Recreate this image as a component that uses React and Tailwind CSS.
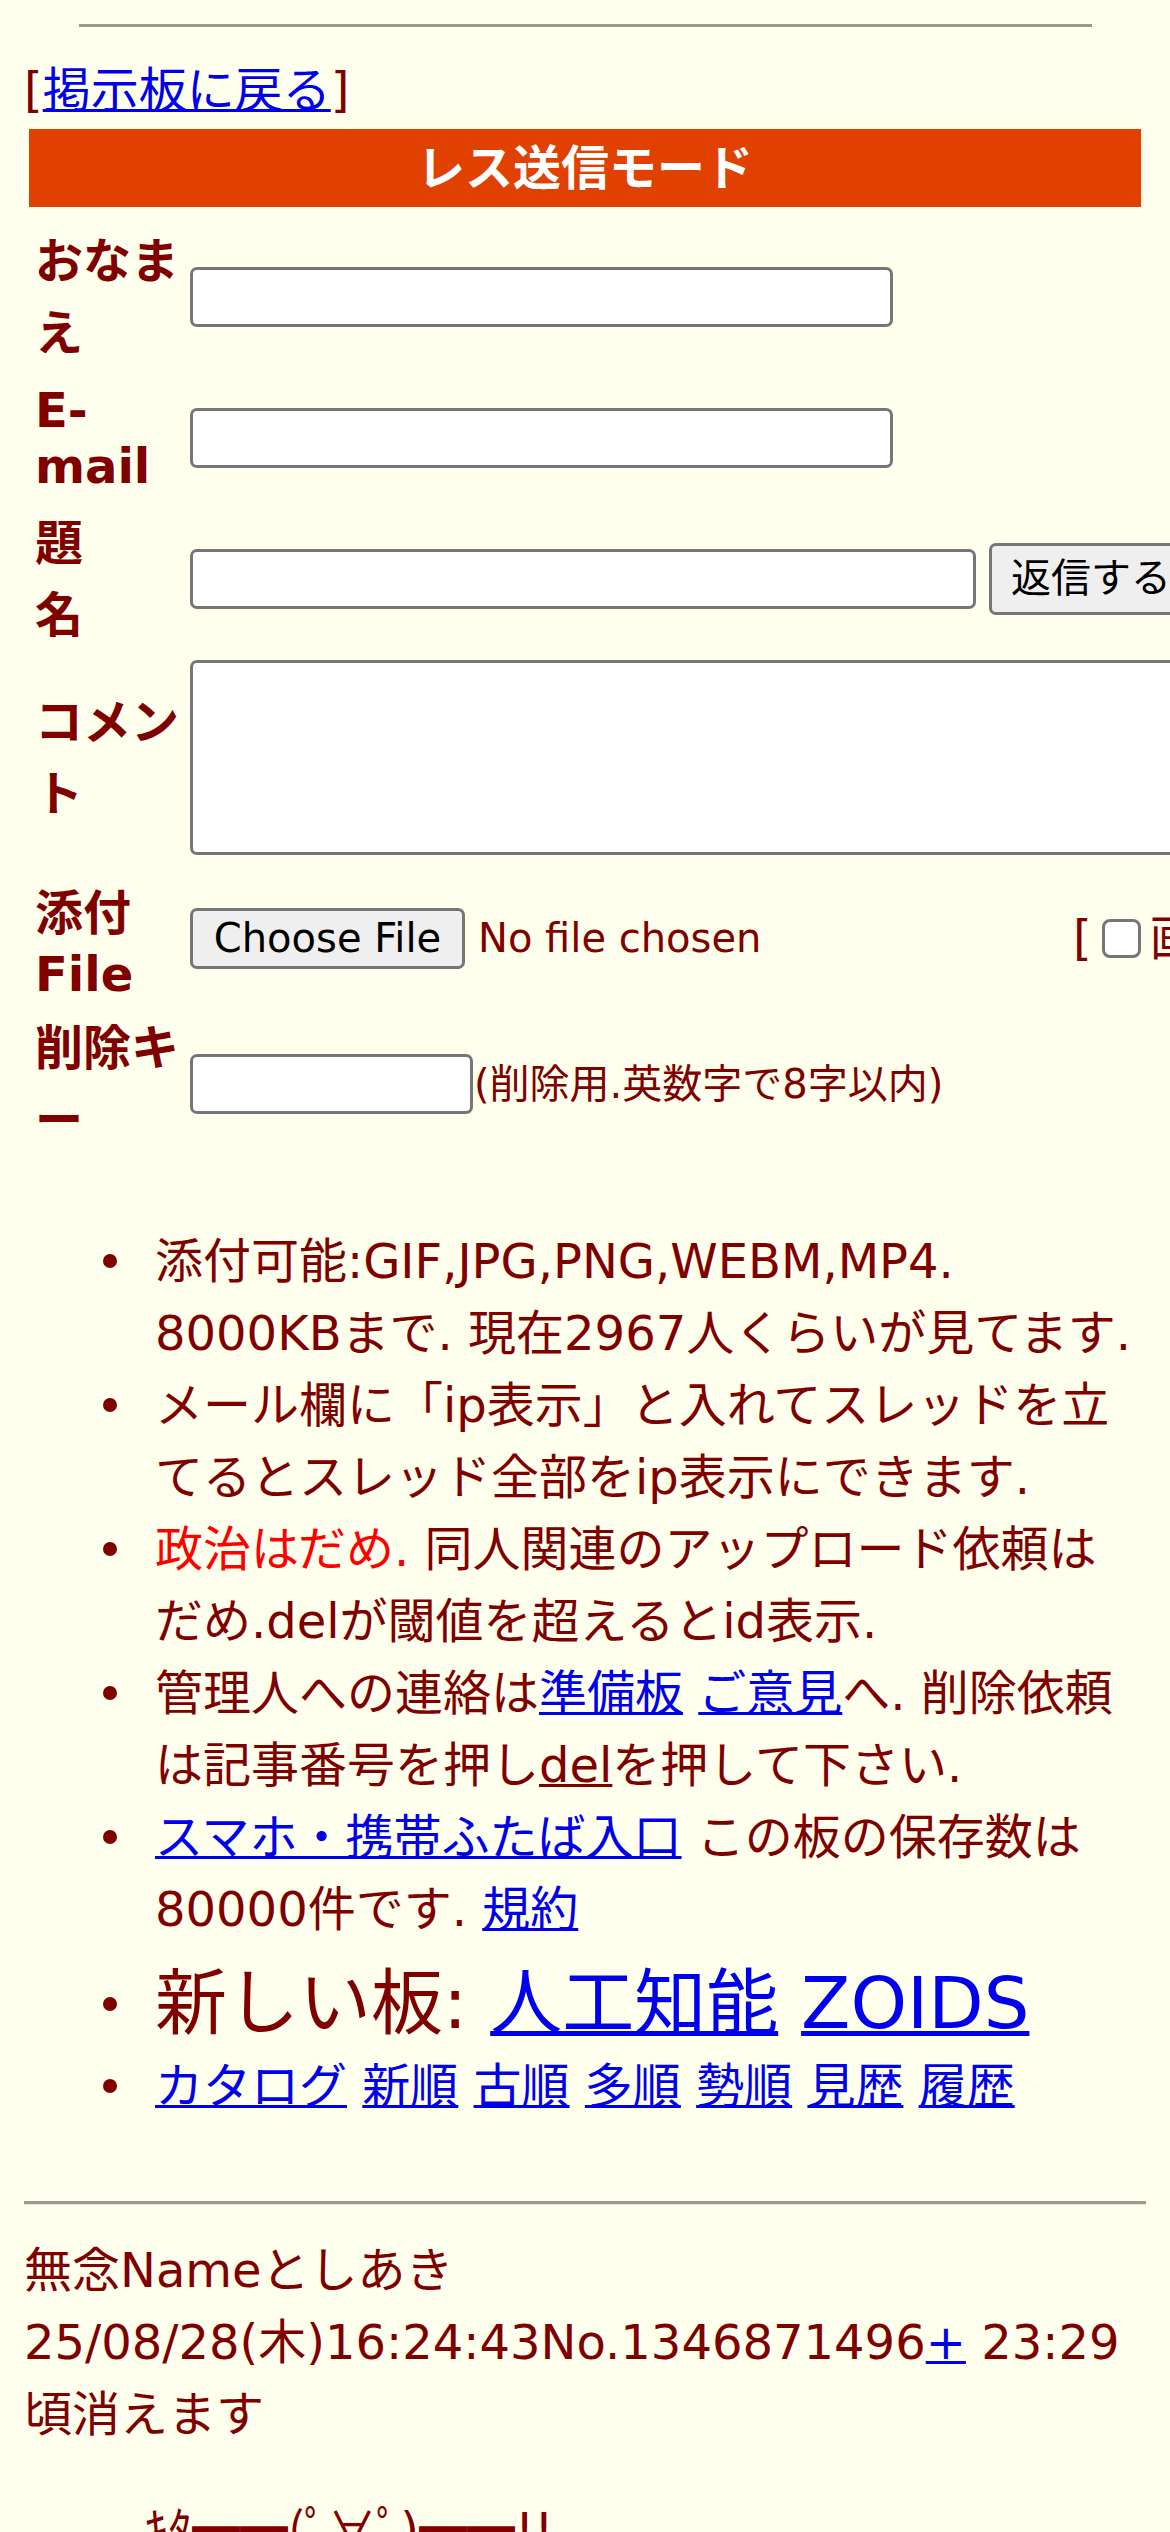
import React from 'react';

const link = "text-[#0000ee] underline decoration-[3px]";
const bigLink = "text-[#0000ee] underline decoration-[5px]";

const TextBox = ({ className = "" }) => (
  <div className={`shrink-0 h-[60px] bg-white border-[3px] border-[#767676] rounded-[7px] ${className}`} />
);

const Label = ({ lines }) => (
  <div className="w-[146px] shrink-0 font-bold">
    {lines.map(([t, lh]) => (
      <div key={t} className={lh}>{t}</div>
    ))}
  </div>
);

const Item = ({ children, big }) => (
  <li className="flex">
    <div className={`w-[52px] shrink-0 flex items-center ${big ? 'h-[105px] pt-[12px]' : 'h-[72px]'}`}>
      <div className="w-[14px] h-[14px] rounded-full bg-[#800000]" />
    </div>
    <div className="min-w-0 flex-1">{children}</div>
  </li>
);

export default function App() {
  return (
    <div className="w-[1170px] h-[2532px] overflow-hidden bg-[#ffffee] text-[#800000] font-['DejaVu_Sans','Noto_Sans_CJK_JP',sans-serif] text-[48px] leading-[72px]">
      <div className="px-[24px] pt-[24px]">
        {/* top rule */}
        <div className="mx-auto w-[1013px] h-[3px] bg-[#9a9a92]" />

        <div className="mt-[27px] h-[72px]">
          [<a className={link}>掲示板に戻る</a>]
        </div>

        <div className="mt-[3px] mx-[5px] h-[78px] pt-[3px] bg-[#e04000] text-white font-bold text-center">
          レス送信モード
        </div>

        {/* reply form */}
        <div className="mt-[18px] pl-[11px] flex flex-col gap-[13px]">
          <div className="flex items-center gap-[9px]">
            <Label lines={[["おなま", "leading-[72px]"], ["え", "leading-[72px]"]]} />
            <TextBox className="w-[703px]" />
          </div>
          <div className="flex items-center gap-[9px]">
            <Label lines={[["E-", "leading-[56px]"], ["mail", "leading-[56px]"]]} />
            <TextBox className="w-[703px]" />
          </div>
          <div className="flex items-center gap-[9px]">
            <Label lines={[["題", "leading-[72px]"], ["名", "leading-[72px]"]]} />
            <TextBox className="w-[786px]" />
            <div className="shrink-0 ml-[4px] h-[72px] px-[19px] bg-[#efefef] border-[3px] border-[#767676] rounded-[7px] text-black text-[40px] leading-[64px] whitespace-nowrap">
              返信する
            </div>
          </div>
          <div className="-mt-[4px] flex items-center gap-[9px]">
            <Label lines={[["コメン", "leading-[72px]"], ["ト", "leading-[72px]"]]} />
            <div className="shrink-0 w-[1160px] h-[195px] bg-white border-[3px] border-[#767676] rounded-[7px]" />
          </div>
          <div className="mt-[9px] flex items-center gap-[9px] whitespace-nowrap">
            <Label lines={[["添付", "leading-[72px]"], ["File", "leading-[50px]"]]} />
            <div className="shrink-0 w-[868px] flex items-center text-[40px]">
              <div className="h-[61px] w-[275px] bg-[#efefef] border-[3px] border-[#767676] rounded-[7px] text-black text-center leading-[55px]">
                Choose File
              </div>
              <span className="ml-[13px]">No file chosen</span>
            </div>
            <div className="shrink-0 flex items-center ml-[6px]">
              <span>[</span>
              <div className="ml-[10px] w-[39px] h-[39px] bg-white border-[3px] border-[#767676] rounded-[8px]" />
              <span className="ml-[9px]">画像なし]</span>
            </div>
          </div>
          <div className="flex items-center gap-[9px] whitespace-nowrap">
            <Label lines={[["削除キ", "leading-[72px]"], ["ー", "leading-[72px]"]]} />
            <TextBox className="w-[283px]" />
            <span className="text-[40px] -ml-[8px]">(削除用.英数字で8字以内)</span>
          </div>
        </div>

        {/* notes */}
        <ul className="mt-[69px] ml-[79px] w-[1032px]">
          <Item>添付可能:GIF,JPG,PNG,WEBM,MP4. 8000KBまで. 現在2967人くらいが見てます.</Item>
          <Item>メール欄に「ip表示」と入れてスレッドを立てるとスレッド全部をip表示にできます.</Item>
          <Item>
            <span className="text-[#ff0000]">政治はだめ.</span> 同人関連のアップロード依頼はだめ.delが閾値を超えるとid表示.
          </Item>
          <Item>
            管理人への連絡は<a className={link}>準備板</a> <a className={link}>ご意見</a>へ. 削除依頼は記事番号を押し<a className="underline decoration-[3px]">del</a>を押して下さい.
          </Item>
          <Item>
            <a className={link}>スマホ・携帯ふたば入口</a> この板の保存数は80000件です. <a className={link}>規約</a>
          </Item>
          <Item big>
            <div className="pt-[12px]">
              <span className="text-[72px] leading-[93px]">
                新しい板: <a className={bigLink}>人工知能</a> <a className={bigLink}>ZOIDS</a>
              </span>
            </div>
          </Item>
          <Item>
            <a className={link}>カタログ</a> <a className={link}>新順</a> <a className={link}>古順</a> <a className={link}>多順</a> <a className={link}>勢順</a> <a className={link}>見歴</a> <a className={link}>履歴</a>
          </Item>
        </ul>

        <div className="mt-[79px] h-[4px] bg-[#9a9a92] border-b-[1px] border-[#e6e6dc]" />

        {/* thread post */}
        <div className="mt-[29px]">
          無念Nameとしあき 25/08/28(木)16:24:43No.1346871496<a className={link}>+</a> 23:29頃消えます
        </div>
        <blockquote className="mt-[40px] ml-[120px]">
          ｷﾀ<span className="font-['Noto_Sans_CJK_JP',sans-serif]">━━</span>(ﾟ∀ﾟ)<span className="font-['Noto_Sans_CJK_JP',sans-serif]">━━</span>!!
        </blockquote>
      </div>
    </div>
  );
}
